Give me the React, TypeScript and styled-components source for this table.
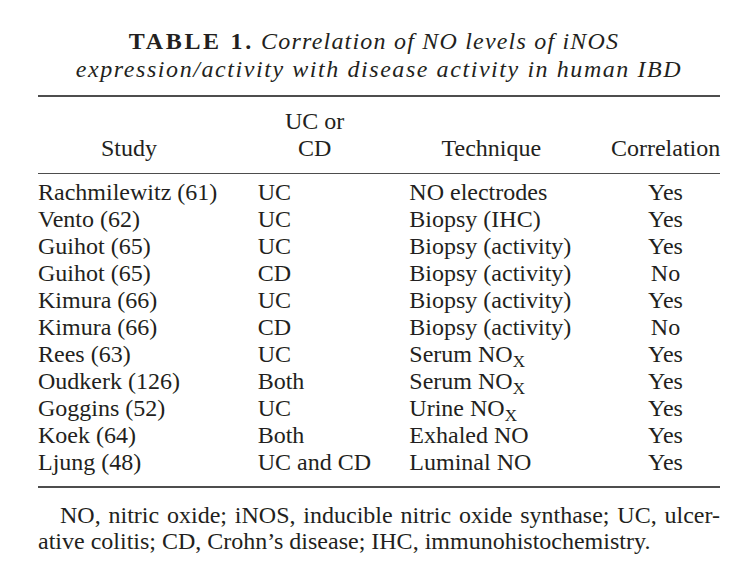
import React from "react";
import styled, { createGlobalStyle } from "styled-components";

const Global = createGlobalStyle`
  html, body { margin: 0; padding: 0; background: #ffffff; }
  body {
    font-family: "Liberation Serif", "Times New Roman", serif;
    color: #231f20;
  }
`;

const Page = styled.div`
  width: 682px;
  padding: 27px 26px 0 38px;
`;

const Title = styled.h1`
  margin: 0 0 12px;
  font-size: 24px;
  line-height: 28px;
  font-weight: normal;
  font-style: italic;
  text-align: center;
`;

const TitleLine = styled.div<{ $spacing: number; $shift?: number }>`
  letter-spacing: ${(p) => p.$spacing}px;
  padding-right: ${(p) => p.$shift ?? 0}px;
  white-space: nowrap;
`;

const Label = styled.span`
  font-style: normal;
  font-weight: bold;
  letter-spacing: 2.7px;
`;

const Table = styled.div`
  border-top: 2px solid #4d4d4d;
  border-bottom: 2px solid #4d4d4d;
  font-size: 24px;
  line-height: 27px;
`;

const Row = styled.div`
  display: grid;
  grid-template-columns: 182px 114px 164px 109px;
  justify-content: space-between;
`;

const HeadRow = styled(Row)`
  padding: 11px 0;
  border-bottom: 1px solid #4d4d4d;
  align-items: end;
`;

const Body = styled.div`
  padding: 5px 0 10px;
`;

const HeadCell = styled.div`
  text-align: center;
`;

const Cell = styled.div<{ $center?: boolean }>`
  text-align: ${(p) => (p.$center ? "center" : "left")};
  white-space: nowrap;
`;

const Sub = styled.span`
  font-size: 17px;
  line-height: 0;
  vertical-align: -5px;
`;

const Note = styled.div`
  margin-top: 14px;
  font-size: 24px;
  line-height: 26px;
`;

const NoteLine = styled.div<{ $first?: boolean }>`
  padding-left: ${(p) => (p.$first ? "22px" : "0")};
  text-align: ${(p) => (p.$first ? "justify" : "left")};
  text-align-last: ${(p) => (p.$first ? "justify" : "left")};
`;

type Entry = { study: string; type: string; tech: React.ReactNode; corr: string };

const nox = (word: string) => (
  <>
    {word} NO<Sub>X</Sub>
  </>
);

const rows: Entry[] = [
  { study: "Rachmilewitz (61)", type: "UC", tech: "NO electrodes", corr: "Yes" },
  { study: "Vento (62)", type: "UC", tech: "Biopsy (IHC)", corr: "Yes" },
  { study: "Guihot (65)", type: "UC", tech: "Biopsy (activity)", corr: "Yes" },
  { study: "Guihot (65)", type: "CD", tech: "Biopsy (activity)", corr: "No" },
  { study: "Kimura (66)", type: "UC", tech: "Biopsy (activity)", corr: "Yes" },
  { study: "Kimura (66)", type: "CD", tech: "Biopsy (activity)", corr: "No" },
  { study: "Rees (63)", type: "UC", tech: nox("Serum"), corr: "Yes" },
  { study: "Oudkerk (126)", type: "Both", tech: nox("Serum"), corr: "Yes" },
  { study: "Goggins (52)", type: "UC", tech: nox("Urine"), corr: "Yes" },
  { study: "Koek (64)", type: "Both", tech: "Exhaled NO", corr: "Yes" },
  { study: "Ljung (48)", type: "UC and CD", tech: "Luminal NO", corr: "Yes" },
];

export default function App() {
  return (
    <>
      <Global />
      <Page>
        <Title>
          <TitleLine $spacing={1.2} $shift={10}>
            <Label>TABLE 1.</Label> Correlation of NO levels of iNOS
          </TitleLine>
          <TitleLine $spacing={1.57}>
            expression/activity with disease activity in human IBD
          </TitleLine>
        </Title>
        <Table>
          <HeadRow>
            <HeadCell>Study</HeadCell>
            <HeadCell>
              UC or
              <br />
              CD
            </HeadCell>
            <HeadCell>Technique</HeadCell>
            <HeadCell>Correlation</HeadCell>
          </HeadRow>
          <Body>
            {rows.map((r, i) => (
              <Row key={i}>
                <Cell>{r.study}</Cell>
                <Cell>{r.type}</Cell>
                <Cell>{r.tech}</Cell>
                <Cell $center>{r.corr}</Cell>
              </Row>
            ))}
          </Body>
        </Table>
        <Note>
          <NoteLine $first>
            NO, nitric oxide; iNOS, inducible nitric oxide synthase; UC, ulcer-
          </NoteLine>
          <NoteLine>ative colitis; CD, Crohn’s disease; IHC, immunohistochemistry.</NoteLine>
        </Note>
      </Page>
    </>
  );
}
